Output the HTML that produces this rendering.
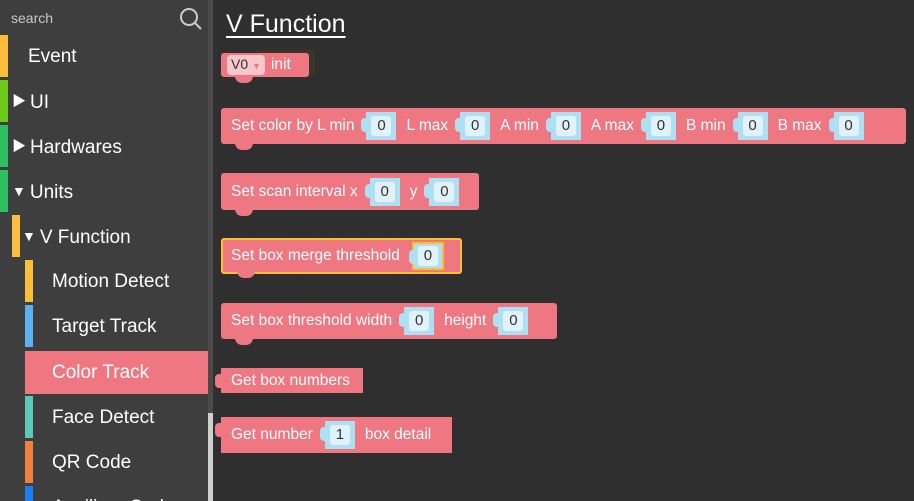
<!DOCTYPE html>
<html style="width:914px;height:501px;overflow:hidden"><head><meta charset="utf-8"><style>
*{margin:0;padding:0;box-sizing:border-box}
body{width:914px;height:501px;background:#2f2f2f;font-family:"Liberation Sans","Noto Sans CJK SC",sans-serif;position:relative;overflow:hidden}
#side{position:absolute;left:0;top:0;width:208px;height:501px;background:#3e3e3e;overflow:hidden}
#sb{position:absolute;left:208px;top:0;width:5px;height:501px;background:#4a4a4a}
#thumb{position:absolute;left:208px;top:413px;width:5px;height:88px;background:#cfcfcf}
.search{position:absolute;left:11px;top:10px;color:#c8c8c8;font-size:14px}
.row{position:absolute;height:43px;color:#fff;font-size:19px;line-height:43px;overflow:hidden}
.bar{position:absolute;top:0;width:8px;height:42px}
.tri{font-size:14px;vertical-align:2px;margin-right:4px}
.blk{position:absolute;left:221px;background:#ee7782;color:#fff;font-size:15.5px;display:flex;align-items:center;padding-left:10px;border-radius:3px;white-space:nowrap}
.in{position:relative;width:30px;height:28px;background:#aee0f4;margin:0 10px 0 12px;display:flex;align-items:center;justify-content:center}
.in::before{content:"";position:absolute;left:-5px;top:6px;width:6px;height:14px;background:#aee0f4;border-radius:4px 0 0 4px}
.in span{background:#e2f2fa;color:#333;width:20px;height:20px;border-radius:3px;text-align:center;line-height:20px;font-size:15px}
.notch{position:absolute;left:14px;bottom:-6px;width:18px;height:7px;background:#ee7782;border-radius:0 0 8px 8px}
</style></head><body>
<div id="side">
<div class="search">search</div>
<svg style="position:absolute;left:178px;top:6px" width="26" height="26" viewBox="0 0 26 26"><circle cx="11" cy="11" r="8" fill="none" stroke="#ccc" stroke-width="2"/><line x1="17" y1="17" x2="23" y2="23" stroke="#ccc" stroke-width="2"/></svg>
<div class="row" style="top:35px;left:0;width:208px"><div class="bar" style="left:0;background:#fbbd3c"></div><span style="margin-left:28px">Event</span></div>
<div class="row" style="top:80px;left:0;width:208px"><div class="bar" style="left:0;background:#6cc91c"></div><span style="margin-left:12px"><span class="tri">▶</span>UI</span></div>
<div class="row" style="top:125px;left:0;width:208px"><div class="bar" style="left:0;background:#30be62"></div><span style="margin-left:12px"><span class="tri">▶</span>Hardwares</span></div>
<div class="row" style="top:170px;left:0;width:208px"><div class="bar" style="left:0;background:#30be62"></div><span style="margin-left:12px"><span class="tri">▼</span>Units</span></div>
<div class="row" style="top:215px;left:12px;width:196px"><div class="bar" style="left:0;background:#fbbd3c"></div><span style="margin-left:10px"><span class="tri">▼</span>V Function</span></div>
<div class="row" style="top:260px;left:25px;width:183px"><div class="bar" style="left:0;background:#fbbd3c"></div><span style="margin-left:27px">Motion Detect</span></div>
<div class="row" style="top:305px;left:25px;width:183px"><div class="bar" style="left:0;background:#5cb1f5"></div><span style="margin-left:27px">Target Track</span></div>
<div class="row" style="top:351px;left:25px;width:183px;background:#ee7782"><span style="margin-left:27px">Color Track</span></div>
<div class="row" style="top:396px;left:25px;width:183px"><div class="bar" style="left:0;background:#5bc9bb"></div><span style="margin-left:27px">Face Detect</span></div>
<div class="row" style="top:441px;left:25px;width:183px"><div class="bar" style="left:0;background:#f08040"></div><span style="margin-left:27px">QR Code</span></div>
<div class="row" style="top:486px;left:25px;width:183px;height:15px"><div class="bar" style="left:0;background:#1a7ef5"></div><span style="margin-left:27px">Auxiliary Code</span></div>
</div>
<div id="sb"></div><div id="thumb"></div>
<div style="position:absolute;left:226px;top:10px;color:#fff;font-size:25px;text-decoration:underline;text-underline-offset:4px">V Function</div>
<div style="position:absolute;left:255px;top:50px;width:60px;height:26px;background:#3b3528;border-radius:3px"></div>
<div class="blk" style="top:53px;height:24px;width:88px;padding-left:6px"><span style="background:#f8c7cc;color:#333;border-radius:4px;padding:0 4px;font-size:14px;line-height:18px;margin-right:6px">V0 <span style="color:#ee7782;font-size:9px">▼</span></span>init<div class="notch"></div></div>
<div class="blk" style="top:108px;height:36px;width:685px">Set color by L min<div class="in"><span>0</span></div>L max<div class="in"><span>0</span></div>A min<div class="in"><span>0</span></div>A max<div class="in"><span>0</span></div>B min<div class="in"><span>0</span></div>B max<div class="in"><span>0</span></div><div class="notch"></div></div>
<div class="blk" style="top:173px;height:37px;width:258px">Set scan interval x<div class="in"><span>0</span></div>y<div class="in"><span>0</span></div><div class="notch"></div></div>
<div class="blk" style="top:238px;height:36px;width:241px;border:2px solid #fbc02d;padding-left:8px">Set box merge threshold<div class="in" style="border:2px solid #fbc02d;width:32px"><span>0</span></div><div class="notch"></div></div>
<div class="blk" style="top:303px;height:36px;width:336px">Set box threshold width<div class="in"><span>0</span></div>height<div class="in"><span>0</span></div><div class="notch"></div></div>
<div class="blk" style="top:368px;height:25px;width:142px;border-radius:0">Get box numbers</div>
<div style="position:absolute;left:215px;top:374px;width:7px;height:14px;background:#ee7782;border-radius:4px 0 0 4px"></div>
<div class="blk" style="top:417px;height:36px;width:231px;border-radius:0">Get number<div class="in"><span>1</span></div>box detail</div>
<div style="position:absolute;left:215px;top:423px;width:7px;height:14px;background:#ee7782;border-radius:4px 0 0 4px"></div>
</body></html>
